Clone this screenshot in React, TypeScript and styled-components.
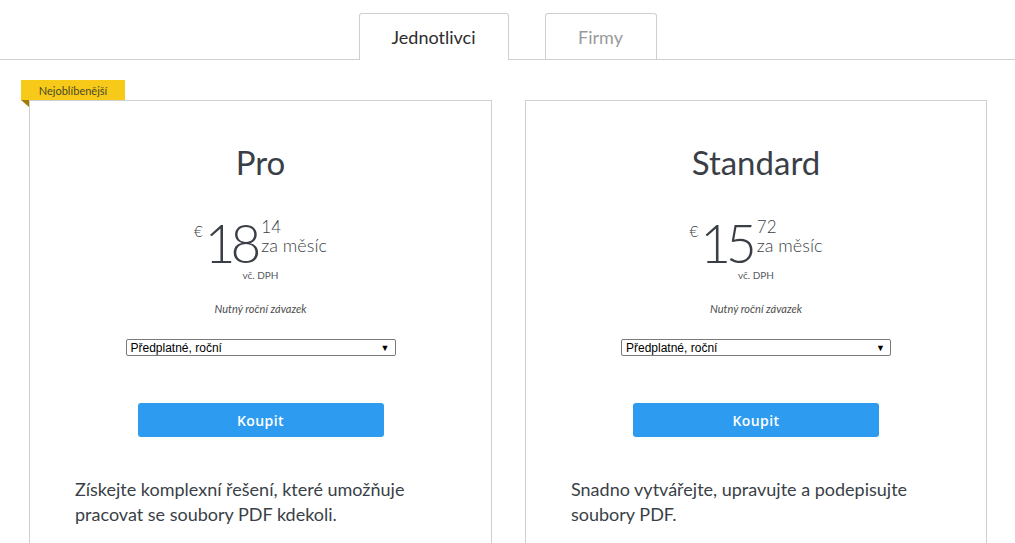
import React from 'react';
import styled, { createGlobalStyle } from 'styled-components';

const GlobalStyle = createGlobalStyle`
  html, body {
    margin: 0;
    padding: 0;
    background: #ffffff;
    font-family: Lato, 'Open Sans', sans-serif;
    color: #3a3f47;
    overflow: hidden;
  }
`;

const Page = styled.div`
  width: 1015px;
  height: 543px;
`;

const TabBar = styled.div`
  display: flex;
  justify-content: center;
  gap: 36px;
  padding-top: 13px;
  border-bottom: 1px solid #cfcfcf;
`;

const Tab = styled.div<{ $active?: boolean }>`
  display: flex;
  align-items: center;
  justify-content: center;
  width: ${(p) => (p.$active ? '148px' : '110px')};
  height: 45px;
  border: 1px solid #cfcfcf;
  border-bottom: none;
  border-radius: 3px 3px 0 0;
  background: #ffffff;
  margin-bottom: ${(p) => (p.$active ? '-1px' : '0')};
  padding-bottom: ${(p) => (p.$active ? '1px' : '0')};
  font-size: 18px;
  color: ${(p) => (p.$active ? '#2c2c2c' : '#9a9a9a')};
`;

const Cards = styled.div`
  display: grid;
  grid-template-columns: 463px 462px;
  gap: 33px;
  padding: 40px 29px 0;
`;

const Card = styled.div`
  position: relative;
  height: 460px;
  border: 1px solid #cfcfcf;
  display: flex;
  flex-direction: column;
  align-items: center;
`;

const Badge = styled.div`
  position: absolute;
  left: -9px;
  top: -21px;
  width: 104px;
  height: 20px;
  background: #f7c919;
  font-size: 11px;
  color: #4a4a2a;
  display: flex;
  align-items: center;
  justify-content: center;
  &::after {
    content: '';
    position: absolute;
    left: 0;
    top: 20px;
    border-top: 7px solid #a07c06;
    border-left: 8px solid transparent;
  }
`;

const Title = styled.h2`
  margin: 41px 0 0;
  font-size: 33px;
  font-weight: 400;
  line-height: 40px;
  color: #3a3f47;
`;

const PriceRow = styled.div`
  display: flex;
  align-items: flex-start;
  margin-top: 36px;
`;

const Currency = styled.span`
  font-size: 15px;
  font-weight: 300;
  margin-top: 4px;
  margin-right: 2px;
`;

const Whole = styled.span`
  font-size: 53px;
  font-weight: 300;
  line-height: 50px;
  letter-spacing: -5px;
  margin-right: 5px;
`;

const Fraction = styled.div`
  display: flex;
  flex-direction: column;
  font-weight: 300;
`;

const Cents = styled.span`
  font-size: 17px;
  line-height: 17px;
`;

const Period = styled.span`
  font-size: 18px;
  line-height: 21px;
`;

const Tax = styled.div`
  font-size: 10px;
  line-height: 12px;
  color: #555a60;
  margin-top: 1px;
`;

const Commitment = styled.div`
  font-size: 11px;
  font-style: italic;
  color: #4d4d4d;
  margin-top: 21px;
`;

const SelectBox = styled.div`
  display: flex;
  align-items: center;
  justify-content: space-between;
  box-sizing: border-box;
  width: 270px;
  height: 17px;
  margin-top: 24px;
  padding: 0 5px 0 4px;
  border: 1px solid #7a7a7a;
  border-radius: 2px;
  font-family: 'Liberation Sans', Arial, sans-serif;
  font-size: 12px;
  color: #000000;
`;

const Arrow = styled.span`
  font-size: 9px;
`;

const BuyButton = styled.button`
  width: 246px;
  height: 34px;
  margin-top: 47px;
  border: none;
  border-radius: 3px;
  background: #2d9cf0;
  color: #ffffff;
  font-family: 'Open Sans', Lato, sans-serif;
  font-size: 14px;
  font-weight: 600;
  letter-spacing: 0.4px;
`;

const Description = styled.p`
  align-self: stretch;
  margin: 40px 0 0;
  padding: 0 45px;
  font-size: 18px;
  line-height: 25px;
  color: #3a3f47;
`;

type Plan = {
  name: string;
  whole: string;
  cents: string;
  text: string;
  popular?: boolean;
};

const plans: Plan[] = [
  {
    name: 'Pro',
    whole: '18',
    cents: '14',
    text: 'Získejte komplexní řešení, které umožňuje pracovat se soubory PDF kdekoli.',
    popular: true,
  },
  {
    name: 'Standard',
    whole: '15',
    cents: '72',
    text: 'Snadno vytvářejte, upravujte a podepisujte soubory PDF.',
  },
];

function App() {
  return (
    <Page>
      <GlobalStyle />
      <TabBar>
        <Tab $active>Jednotlivci</Tab>
        <Tab>Firmy</Tab>
      </TabBar>
      <Cards>
        {plans.map((plan) => (
          <Card key={plan.name}>
            {plan.popular && <Badge>Nejoblíbenější</Badge>}
            <Title>{plan.name}</Title>
            <PriceRow>
              <Currency>€</Currency>
              <Whole>{plan.whole}</Whole>
              <Fraction>
                <Cents>{plan.cents}</Cents>
                <Period>za měsíc</Period>
              </Fraction>
            </PriceRow>
            <Tax>vč. DPH</Tax>
            <Commitment>Nutný roční závazek</Commitment>
            <SelectBox>
              <span>Předplatné, roční</span>
              <Arrow>▼</Arrow>
            </SelectBox>
            <BuyButton>Koupit</BuyButton>
            <Description>{plan.text}</Description>
          </Card>
        ))}
      </Cards>
    </Page>
  );
}

export default App;
